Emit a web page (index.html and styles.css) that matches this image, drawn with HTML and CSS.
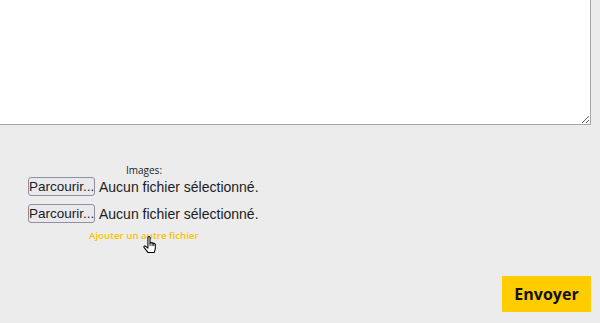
FILE: index.html
```html
<!DOCTYPE html>
<html lang="fr">
<head>
<meta charset="utf-8">
<title>Formulaire</title>
<link rel="stylesheet" href="styles.css">
</head>
<body>
<form class="form">
  <textarea class="message"></textarea>
  <div class="uploads">
    <div class="uploads-label">Images:</div>
    <div class="file-row"><button type="button" class="file-btn">Parcourir...</button><span class="file-name">Aucun fichier sélectionné.</span></div>
    <div class="file-row"><button type="button" class="file-btn">Parcourir...</button><span class="file-name">Aucun fichier sélectionné.</span></div>
    <a class="add-file" href="#">Ajouter un autre fichier</a>
  </div>
  <div class="actions">
    <button type="submit" class="submit">Envoyer</button>
  </div>
</form>
<svg class="cursor" width="13" height="18" viewBox="0 0 12 17" aria-hidden="true">
  <path d="M4.5 1.5 Q4.5 0.5 5.5 0.5 Q6.5 0.5 6.5 1.5 V6.5 Q7.5 6 8.5 6.6 Q9.5 6.2 10 7.1 Q11.3 6.9 11.5 8 V12 L10.5 15.5 H4.5 L1 11 Q0.3 10 1.2 9.5 Q2 9.2 2.8 10 L4.5 11.5 Z" fill="#fff" stroke="#000" stroke-width="1" stroke-linejoin="round"/>
  <path d="M6.5 6.5 V9.5 M8.5 6.6 V9.5 M10 7.1 V9.5" stroke="#000" stroke-width="0.8" fill="none"/>
</svg>
</body>
</html>
```
FILE: styles.css
```css
html, body {
  margin: 0;
  padding: 0;
  background: #ececec;
  overflow: hidden;
}
body {
  width: 600px;
  height: 323px;
  position: relative;
  font-family: "Open Sans", "Liberation Sans", sans-serif;
  color: #1c1b22;
}
.form {
  width: 591px;
  display: flex;
  flex-direction: column;
}
.message {
  display: block;
  box-sizing: border-box;
  width: 593px;
  height: 127px;
  margin: -2px 0 0 -2px;
  border: 1px solid #a6a6a6;
  background: #fff;
  resize: both;
}
.uploads {
  width: 232px;
  margin: 38px 0 0 28px;
  display: flex;
  flex-direction: column;
}
.uploads-label {
  font-size: 10px;
  line-height: 14px;
  text-align: center;
  color: #222;
}
.file-row {
  display: flex;
  align-items: center;
  height: 19px;
  margin-bottom: 8px;
  font-family: "Liberation Sans", Arial, sans-serif;
  font-size: 14px;
}
.file-row + .file-row {
  margin-bottom: 6px;
}
.file-btn {
  box-sizing: border-box;
  height: 19px;
  width: 67px;
  padding: 0;
  border: 1px solid #8f8f9d;
  border-radius: 3px;
  background: #e9e9ed;
  color: #1c1b22;
  font-family: "Liberation Sans", Arial, sans-serif;
  font-size: 13.5px;
  line-height: 17px;
  white-space: nowrap;
}
.file-name {
  margin-left: 4px;
  white-space: nowrap;
}
.add-file {
  margin: 0 0 0 61px;
  font-size: 9.7px;
  line-height: 14px;
  font-weight: 600;
  color: #f5c400;
  text-decoration: none;
  white-space: nowrap;
}
.actions {
  display: flex;
  justify-content: flex-end;
  margin-top: 33px;
}
.submit {
  width: 89px;
  height: 36px;
  padding: 0;
  border: none;
  background: #ffcc00;
  color: #111;
  font-family: "Open Sans", "Liberation Sans", sans-serif;
  font-size: 16px;
  font-weight: 700;
}
.cursor {
  position: absolute;
  left: 143px;
  top: 236px;
}
```
